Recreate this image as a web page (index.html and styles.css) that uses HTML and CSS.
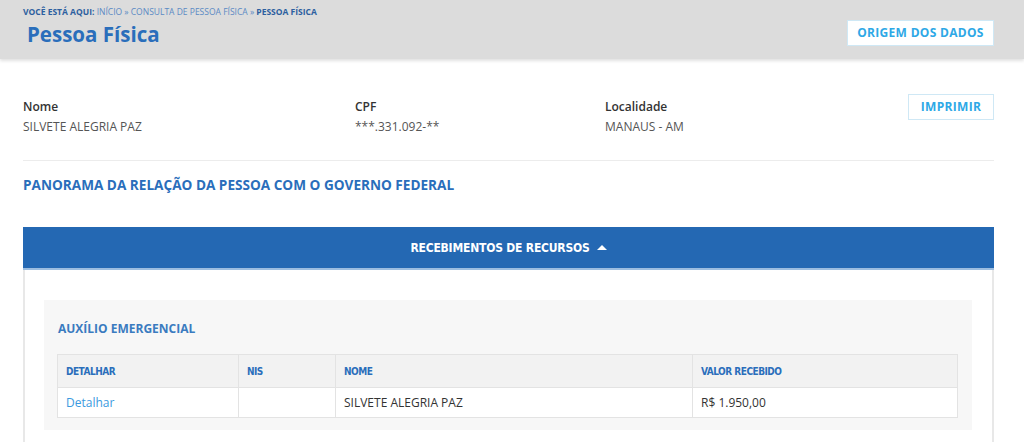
FILE: index.html
```html
<!DOCTYPE html>
<html lang="pt-BR">
<head>
    <meta charset="UTF-8">
    <title>Pessoa Física</title>
    <link rel="stylesheet" href="styles.css">
</head>
<body>
    <header class="page-header">
        <div class="header-text">
            <div class="breadcrumb">
                <strong>VOCÊ ESTÁ AQUI:</strong>
                <a href="#">INÍCIO</a> » <a href="#">CONSULTA DE PESSOA FÍSICA</a> » <strong>PESSOA FÍSICA</strong>
            </div>
            <h1>Pessoa Física</h1>
        </div>
        <a class="btn btn-origem" href="#">ORIGEM DOS DADOS</a>
    </header>

    <main class="content">
        <section class="info-row">
            <div class="info-col col-nome">
                <strong>Nome</strong>
                <span>SILVETE ALEGRIA PAZ</span>
            </div>
            <div class="info-col col-cpf">
                <strong>CPF</strong>
                <span>***.331.092-**</span>
            </div>
            <div class="info-col col-local">
                <strong>Localidade</strong>
                <span>MANAUS - AM</span>
            </div>
            <a class="btn btn-imprimir" href="#">IMPRIMIR</a>
        </section>

        <h2 class="panorama">PANORAMA DA RELAÇÃO DA PESSOA COM O GOVERNO FEDERAL</h2>

        <section class="accordion">
            <button class="accordion-head">RECEBIMENTOS DE RECURSOS <span class="caret"></span></button>
            <div class="accordion-body">
                <div class="box">
                    <h3>AUXÍLIO EMERGENCIAL</h3>
                    <table>
                        <thead>
                            <tr>
                                <th class="c1">DETALHAR</th>
                                <th class="c2">NIS</th>
                                <th class="c3">NOME</th>
                                <th>VALOR RECEBIDO</th>
                            </tr>
                        </thead>
                        <tbody>
                            <tr>
                                <td><a href="#">Detalhar</a></td>
                                <td></td>
                                <td>SILVETE ALEGRIA PAZ</td>
                                <td>R$ 1.950,00</td>
                            </tr>
                        </tbody>
                    </table>
                </div>
            </div>
        </section>
    </main>
</body>
</html>
```

FILE: styles.css
```css
body {
    margin: 0;
    font-family: "Open Sans", Arial, sans-serif;
    color: #333;
    background-color: #fff;
}

a {
    text-decoration: none;
}

.page-header {
    display: flex;
    justify-content: space-between;
    align-items: flex-start;
    height: 59px;
    padding: 0 30px 0 23px;
    background-color: #dcdcdc;
    box-shadow: 0 2px 3px rgba(0, 0, 0, 0.12);
}

.breadcrumb {
    padding-top: 6px;
    font-size: 8.5px;
    line-height: 12px;
    color: #5b8ac4;
}

.breadcrumb strong {
    color: #2c5f9f;
}

.breadcrumb a {
    color: #5b8ac4;
}

.page-header h1 {
    margin: 2px 0 0 4px;
    font-size: 20.5px;
    line-height: 28px;
    font-weight: 700;
    color: #2a6ebb;
}

.btn {
    display: inline-block;
    box-sizing: border-box;
    background-color: #fff;
    border: 1px solid #cfe8f5;
    color: #2ea8e6;
    font-weight: 700;
    font-size: 12px;
    letter-spacing: 0.3px;
    text-align: center;
}

.btn-origem {
    margin-top: 20px;
    width: 147px;
    height: 26px;
    line-height: 24px;
}

.content {
    padding: 0 30px 0 23px;
}

.info-row {
    display: flex;
    align-items: flex-start;
    padding: 38px 0 23px;
    border-bottom: 1px solid #ececec;
}

.info-col {
    display: flex;
    flex-direction: column;
    font-size: 12px;
    line-height: 20px;
}

.info-col strong {
    color: #333;
    font-weight: 600;
}

.info-col span {
    color: #555;
}

.col-nome {
    width: 332px;
}

.col-cpf {
    width: 250px;
}

.col-local {
    flex: 1;
}

.btn-imprimir {
    margin-top: -3px;
    width: 86px;
    height: 26px;
    line-height: 24px;
}

.panorama {
    margin: 14px 0 0;
    font-size: 13.6px;
    line-height: 20px;
    font-weight: 700;
    color: #2a6ebb;
}

.accordion {
    margin-top: 32px;
}

.accordion-head {
    display: flex;
    justify-content: center;
    align-items: center;
    gap: 7px;
    width: 100%;
    height: 43px;
    border: none;
    border-bottom: 2px solid #9cbde0;
    background-color: #2468b3;
    color: #fff;
    font-family: "DejaVu Sans Condensed", "Liberation Sans Narrow", sans-serif;
    font-stretch: condensed;
    font-weight: 700;
    font-size: 12px;
    letter-spacing: -0.2px;
    cursor: pointer;
}

.caret {
    width: 0;
    height: 0;
    border-left: 5px solid transparent;
    border-right: 5px solid transparent;
    border-bottom: 5px solid #fff;
}

.accordion-body {
    border-left: 2px solid #e8e8e8;
    border-right: 2px solid #e8e8e8;
    padding: 30px 20px 20px 19px;
}

.box {
    background-color: #f7f7f7;
    padding: 21px 14px 12px 13px;
}

.box h3 {
    margin: 0 0 17px 1px;
    font-size: 12px;
    line-height: 16px;
    font-weight: 700;
    color: #3a7bc0;
}

table {
    width: 100%;
    border-collapse: collapse;
    background-color: #fff;
}

th, td {
    border: 1px solid #e3e3e3;
    text-align: left;
    padding: 0 8px;
}

th {
    height: 32px;
    background-color: #f2f2f2;
    font-family: "DejaVu Sans Condensed", "Liberation Sans Narrow", sans-serif;
    font-stretch: condensed;
    font-size: 10px;
    font-weight: 700;
    letter-spacing: -0.5px;
    color: #2a6ebb;
}

td {
    height: 29px;
    font-size: 12px;
    color: #333;
}

td a {
    color: #3a9ae0;
}

.c1 {
    width: 164px;
}

.c2 {
    width: 80px;
}

.c3 {
    width: 340px;
}
```
